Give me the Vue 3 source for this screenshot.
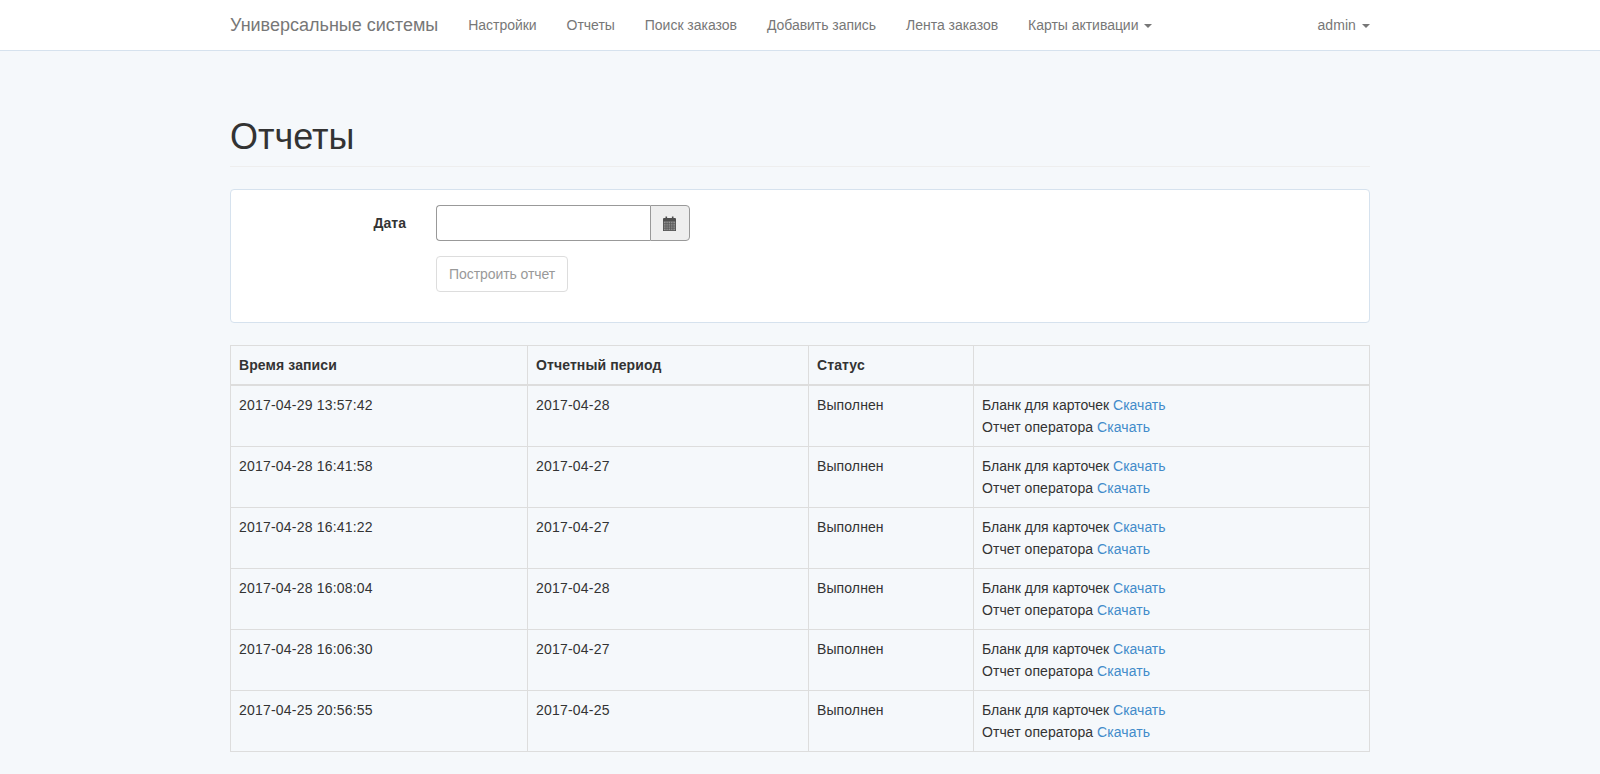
<script setup>
const nav = ['Настройки', 'Отчеты', 'Поиск заказов', 'Добавить запись', 'Лента заказов']
const rows = [
  ['2017-04-29 13:57:42', '2017-04-28'],
  ['2017-04-28 16:41:58', '2017-04-27'],
  ['2017-04-28 16:41:22', '2017-04-27'],
  ['2017-04-28 16:08:04', '2017-04-28'],
  ['2017-04-28 16:06:30', '2017-04-27'],
  ['2017-04-25 20:56:55', '2017-04-25'],
]
</script>

<template>
  <div class="page">
    <nav class="navbar">
      <div class="container nav-inner">
        <a class="brand">Универсальные системы</a>
        <a v-for="n in nav" :key="n" class="nav-link">{{ n }}</a>
        <a class="nav-link">Карты активации <span class="caret"></span></a>
        <a class="nav-link right">admin <span class="caret"></span></a>
      </div>
    </nav>
    <main class="container">
      <header class="page-header"><h1>Отчеты</h1></header>
      <section class="panel">
        <div class="form-row">
          <label class="label">Дата</label>
          <div class="input-group">
            <input class="input" type="text" />
            <span class="addon">
              <svg class="cal" width="13" height="15" viewBox="0 0 13 15">
                <path fill="#4f4f4f" d="M0 3a1 1 0 0 1 1-1h1.5V.5h1.6V2h4.8V.5h1.6V2H12a1 1 0 0 1 1 1v12H0z" />
                <path fill="#959595" d="M.8 5.5h11.4v8.8H.8z" />
                <path stroke="#555" stroke-width=".8" fill="none" d="M.8 7.7h11.4M.8 10h11.4M.8 12.2h11.4M3 5.5v8.8M5.2 5.5v8.8M7.6 5.5v8.8M9.9 5.5v8.8" />
              </svg>
            </span>
          </div>
        </div>
        <div class="form-row actions">
          <button class="btn" type="button" disabled>Построить отчет</button>
        </div>
      </section>
      <table class="table">
        <colgroup>
          <col class="c1" /><col class="c2" /><col class="c3" /><col />
        </colgroup>
        <thead>
          <tr><th>Время записи</th><th>Отчетный период</th><th>Статус</th><th></th></tr>
        </thead>
        <tbody>
          <tr v-for="r in rows" :key="r[0]">
            <td class="num">{{ r[0] }}</td>
            <td class="num">{{ r[1] }}</td>
            <td class="status">Выполнен</td>
            <td>
              <div>Бланк для карточек <a class="link">Скачать</a></div>
              <div class="op">Отчет оператора <a class="link">Скачать</a></div>
            </td>
          </tr>
        </tbody>
      </table>
    </main>
  </div>
</template>

<style>
body { margin: 0; background: #f5f8fb; }
</style>

<style scoped>
.page {
  font-family: "Liberation Sans", Arial, sans-serif;
  font-size: 14px;
  line-height: 22px;
  color: #333;
  background: #f5f8fb;
  min-height: 774px;
}
.container { width: 1140px; margin: 0 auto; }
.navbar { height: 50px; background: #fff; border-bottom: 1px solid #d6e2ee; }
.nav-inner { display: flex; align-items: center; height: 50px; }
.brand { font-size: 18px; color: #777; margin-right: 15px; }
.nav-link { color: #777; padding: 0 15px; white-space: nowrap; letter-spacing: -0.03px; }
.nav-link.right { margin-left: auto; padding-right: 0; letter-spacing: 0.1px; }
.caret {
  display: inline-block;
  width: 0; height: 0;
  margin-left: 2px;
  vertical-align: middle;
  border-top: 4px solid #777;
  border-left: 4px solid transparent;
  border-right: 4px solid transparent;
}
.page-header {
  margin-top: 66px;
  padding-bottom: 9px;
  border-bottom: 1px solid #eee;
  margin-bottom: 22px;
}
h1 { margin: 0; font-size: 36px; font-weight: 500; line-height: 40px; color: #333; }
.panel {
  background: #fff;
  border: 1px solid #d6e2ee;
  border-radius: 4px;
  padding: 15px 0 29px;
  margin-bottom: 22px;
  box-sizing: border-box;
  height: 134px;
}
.form-row { display: flex; align-items: center; }
.label { width: 175px; text-align: right; font-weight: 700; margin-right: 30px; }
.input-group { display: flex; width: 254px; height: 36px; }
.input {
  flex: 1; min-width: 0;
  box-sizing: border-box;
  height: 36px;
  border: 1px solid #999;
  border-right: 0;
  border-radius: 4px 0 0 4px;
  background: #fff;
  padding: 6px 12px;
  outline: none;
}
.addon {
  box-sizing: border-box;
  width: 40px;
  display: flex; align-items: center; justify-content: center;
  background: #eee;
  border: 1px solid #999;
  border-radius: 0 4px 4px 0;
}
.cal { margin-right: 1px; }
.actions { margin-top: 15px; padding-left: 205px; }
.btn {
  font: inherit;
  height: 36px;
  padding: 6px 12px;
  line-height: 20px;
  letter-spacing: -0.07px;
  color: #999;
  background: #fff;
  border: 1px solid #ddd;
  border-radius: 4px;
}
.table { width: 1140px; border-collapse: collapse; table-layout: fixed; }
.c1 { width: 297px; }
.c2 { width: 281px; }
.c3 { width: 165px; }
th, td { border: 1px solid #ddd; padding: 8px; text-align: left; vertical-align: top; }
th { border-bottom-width: 2px; font-weight: 700; letter-spacing: 0.1px; }
.num { letter-spacing: 0.2px; }
.status { letter-spacing: 0.1px; }
.op { letter-spacing: 0.06px; }
.link { color: #428bca; }
</style>
